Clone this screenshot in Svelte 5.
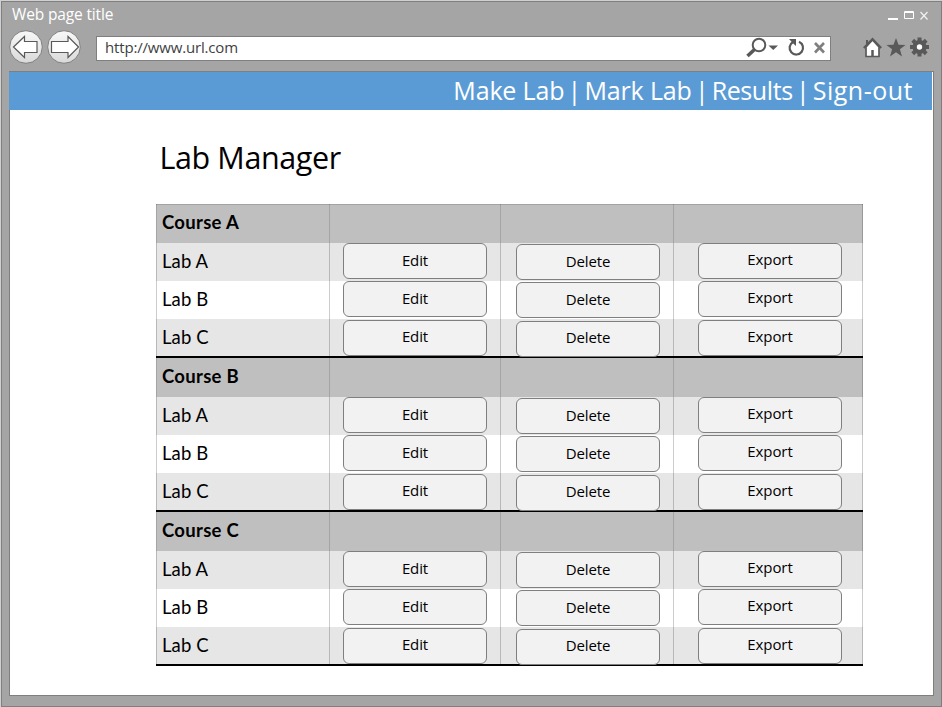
<script>
  const courses = ['Course A', 'Course B', 'Course C'];
  const labs = ['Lab A', 'Lab B', 'Lab C'];
  const gearTeeth = [0, 45, 90, 135, 180, 225, 270, 315];
</script>

<div class="window">
  <header class="titlebar">
    <span class="title">Web page title</span>
    <svg class="controls" width="42" height="14" viewBox="0 0 42 14">
      <path d="M0 11h10" stroke="#fff" stroke-width="2" />
      <path d="M16.500 3.500h9v7h-9zM16.500 4.500h9" fill="none" stroke="#fff" />
      <path d="M32.500 4l7 7.500M39.500 4l-7 7.500" stroke="#f2f2f2" stroke-width="1.2" />
    </svg>
  </header>

  <div class="toolbar">
    <svg class="nav" width="72" height="34" viewBox="0 0 72 34">
      <defs>
        <linearGradient id="face" x1="0" y1="0" x2="0" y2="1">
          <stop offset="0" stop-color="#f8f8f8" />
          <stop offset="1" stop-color="#d9d9d9" />
        </linearGradient>
      </defs>
      <g fill="url(#face)" stroke="#7f7f7f">
        <circle cx="17" cy="17" r="16.300" />
        <circle cx="55" cy="17" r="16.300" />
      </g>
      <g fill="#fff" stroke="#595959" stroke-width="1.2">
        <path d="M4.500 17L15.500 6.500v5h12.500v11h-12.500v5z" />
        <path d="M69.500 17L59 6.500v5H42.500v11H59v5z" />
      </g>
    </svg>
    <div class="address">
      <span class="url">http://www.url.com</span>
      <svg width="84" height="22" viewBox="0 0 84 22">
        <circle cx="13" cy="8" r="6.300" fill="none" stroke="#595959" stroke-width="2" />
        <path d="M8.500 12.500l-7 6.500" stroke="#595959" stroke-width="3.600" />
        <path d="M22.500 8.500h9.500l-4.750 4.500z" fill="#595959" />
        <path d="M47 5a6.700 6.700 0 1 0 6-.3" fill="none" stroke="#595959" stroke-width="2.200" />
        <path d="M43 2h7v7l-2.500-2.300z" fill="#595959" />
        <path d="M69 6l9 9.500M78 6l-9 9.500" stroke="#7f7f7f" stroke-width="2.600" />
      </svg>
    </div>
    <svg class="tools" width="68" height="22" viewBox="0 0 68 22">
      <path d="M3 10v9.500h13V10l-6.500-7z" fill="#fff" stroke="#595959" stroke-width="1.700" />
      <path d="M.8 11l8.700-9 8.700 9" fill="none" stroke="#595959" stroke-width="2" />
      <path d="M4 3v4" stroke="#595959" stroke-width="2" />
      <path d="M9.500 13v6" stroke="#595959" stroke-width="2.500" />
      <path d="M33 1l2.500 6.800 7 .2-5.600 4.300 2.100 7.200-6-4.200-6 4.200 2.100-7.200-5.600-4.300 7-.2z" fill="#595959" />
      <g transform="translate(56.500 10)" fill="#595959">
        <circle r="7" />
        {#each gearTeeth as angle}
          <rect x="-2" y="-9.500" width="4" height="5" transform="rotate({angle})" />
        {/each}
        <circle r="2.700" fill="#fff" />
      </g>
    </svg>
  </div>

  <main class="page">
    <nav class="menu">
      <span>Make Lab</span><i>|</i><span>Mark Lab</span><i>|</i><span class="results">Results</span><i>|</i><span class="sign">Sign-out</span>
    </nav>
    <h1>Lab Manager</h1>
    <section class="table">
      {#each courses as course}
        <div class="group">
          <div class="row head"><div class="cell">{course}</div><div class="cell"></div><div class="cell"></div><div class="cell"></div></div>
          {#each labs as lab}
            <div class="row">
              <div class="cell">{lab}</div>
              <div class="cell"><button class="edit">Edit</button></div>
              <div class="cell"><button class="delete">Delete</button></div>
              <div class="cell"><button class="export">Export</button></div>
            </div>
          {/each}
        </div>
      {/each}
    </section>
  </main>
</div>

<style>
  :global(body) { margin: 0; background: #d0d0d0; overflow: hidden; }
  .window {
    box-sizing: border-box;
    width: 941px;
    height: 706px;
    margin: 1px 0 0 1px;
    display: flex;
    flex-direction: column;
    background: #a5a5a5;
    border: 1px solid #7f7f7f;
    font-family: "Open Sans", "Noto Sans", sans-serif;
  }
  .titlebar {
    display: flex;
    justify-content: space-between;
    height: 27px;
    padding: 0 10px;
    color: #fff;
  }
  .title { font-size: 15.5px; line-height: 24px; letter-spacing: -0.15px; }
  .controls { margin: 6px 1px 0 0; }
  .toolbar { display: flex; height: 42px; }
  .nav { margin: 1px 0 0 7px; }
  .address {
    box-sizing: border-box;
    display: flex;
    justify-content: space-between;
    width: 735px;
    height: 25px;
    margin: 7px 0 0 15px;
    padding-left: 8px;
    background: #fff;
    border: 1px solid #7f7f7f;
  }
  .url { font-size: 15px; line-height: 20px; letter-spacing: -0.17px; color: #3f3f3f; }
  .tools { margin: 8px 0 0 32px; }
  .page {
    box-sizing: border-box;
    width: 925px;
    height: 625px;
    margin-left: 7px;
    background: #fff;
    border: 1px solid #7f7f7f;
  }
  .menu {
    box-sizing: border-box;
    display: flex;
    justify-content: flex-end;
    width: 923px;
    height: 38px;
    margin-left: -1px;
    padding-right: 19px;
    background: #5b9bd5;
    color: #fff;
    font-size: 25px;
    line-height: 36px;
    letter-spacing: -0.15px;
    white-space: nowrap;
  }
  .menu i { width: 20px; display: flex; justify-content: center; font-style: normal; }
  .menu .results { letter-spacing: -0.4px; }
  .menu .sign { letter-spacing: 0.5px; }
  h1 {
    margin: 0 0 0 149.5px;
    height: 94px;
    font-size: 30.5px;
    font-weight: 400;
    line-height: 95px;
    letter-spacing: -0.4px;
    color: #000;
  }
  .table {
    box-sizing: border-box;
    width: 707px;
    margin-left: 146px;
  }
  .group { height: 152px; border-bottom: 2px solid #000; }
  .row {
    display: grid;
    grid-template-columns: 173px 171px 173px 190px;
    height: 38px;
    background: #fff;
  }
  .row:nth-child(even) { background: #e6e6e6; }
  .row:last-child { height: 37px; background: #e6e6e6; }
  .row.head { height: 39px; background: #bfbfbf; font-weight: 700; }
  .group:first-child .head { box-shadow: inset 0 1px #a3a3a3; }
  .cell {
    border-left: 1px solid rgba(0, 0, 0, 0.2);
    padding-left: 5px;
    font-family: Lato, "Open Sans", sans-serif;
    font-size: 18.5px;
    line-height: 37px;
    letter-spacing: 0.1px;
    color: #000;
  }
  .head .cell { border-color: rgba(0, 0, 0, 0.14); letter-spacing: 0.3px; }
  .cell:last-child { border-right: 1px solid rgba(0, 0, 0, 0.2); }
  .cell:nth-child(n + 2) { padding-left: 13px; }
  .cell:nth-child(3) { padding-left: 15px; }
  .cell:nth-child(4) { padding-left: 24px; }
  button {
    box-sizing: border-box;
    position: relative;
    display: block;
    width: 144px;
    height: 36px;
    padding: 0 0 3px;
    border: 1px solid #7f7f7f;
    border-radius: 6px;
    background: #f2f2f2;
    color: #000;
    font: 15px/30px "Open Sans", "Noto Sans", sans-serif;
    letter-spacing: -0.1px;
  }
  .delete { margin-top: 1px; }
  .export { padding-bottom: 4px; }
  .row:last-child button { margin-top: 1px; padding-bottom: 5px; }
  .row:last-child .delete { margin-top: 2px; }
</style>
